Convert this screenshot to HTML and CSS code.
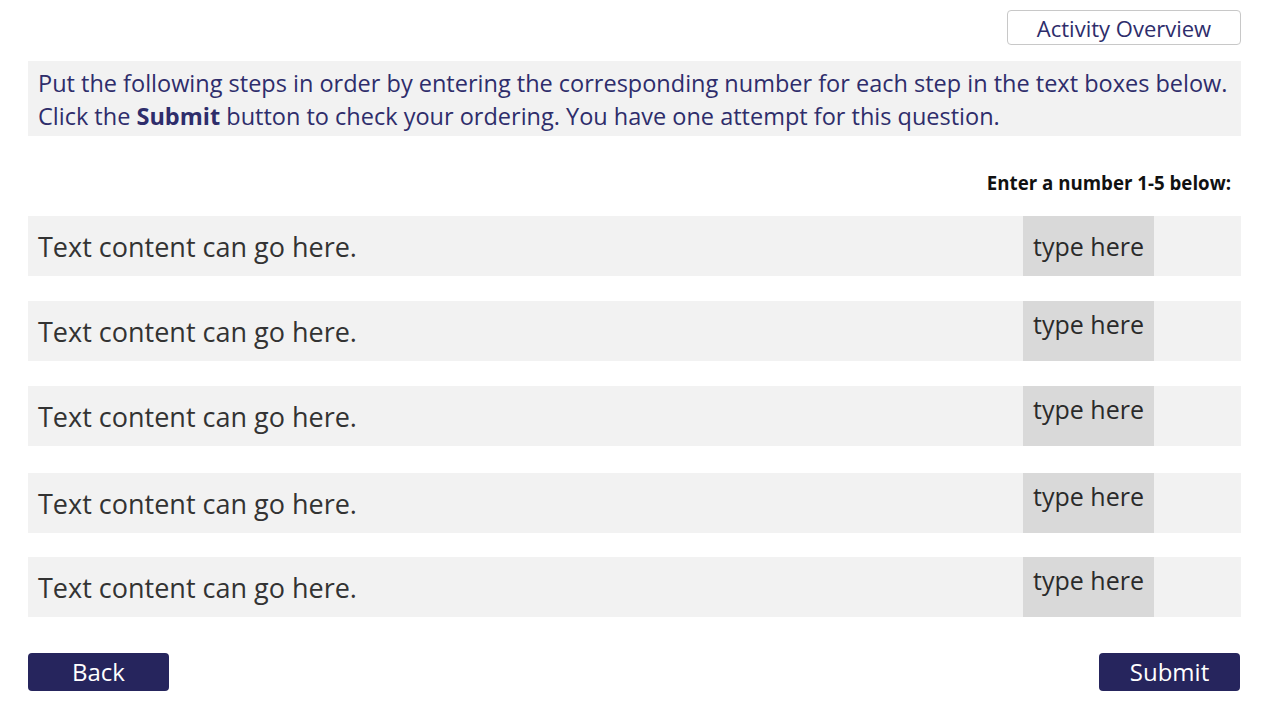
FILE: index.html
```html
<!DOCTYPE html>
<html>
<head>
<meta charset="utf-8">
<link rel="stylesheet" href="styles.css">
</head>
<body>
<div class="page">
  <div class="topbar">
    <button class="overview">Activity Overview</button>
  </div>
  <div class="instructions">
    <p>Put the following steps in order by entering the corresponding number for each step in the text boxes below.</p>
    <p>Click the <b>Submit</b> button to check your ordering. You have one attempt for this question.</p>
  </div>
  <div class="hint">Enter a number 1-5 below:</div>
  <div class="rows">
    <div class="row"><span class="step">Text content can go here.</span><span class="entry entry-first">type here</span></div>
    <div class="row"><span class="step">Text content can go here.</span><span class="entry">type here</span></div>
    <div class="row"><span class="step">Text content can go here.</span><span class="entry">type here</span></div>
    <div class="row row-shift"><span class="step">Text content can go here.</span><span class="entry">type here</span></div>
    <div class="row"><span class="step">Text content can go here.</span><span class="entry">type here</span></div>
  </div>
  <div class="footer">
    <button class="nav">Back</button>
    <button class="nav">Submit</button>
  </div>
</div>
</body>
</html>
```
FILE: styles.css
```css
html, body {
  margin: 0;
  padding: 0;
  background: #ffffff;
  font-family: "Open Sans", "Noto Sans", sans-serif;
}
.page {
  padding: 10px 26px 0 28px;
  display: flex;
  flex-direction: column;
}
.topbar {
  display: flex;
  justify-content: flex-end;
}
.overview {
  width: 234px;
  height: 35px;
  border: 1px solid #c8c8c8;
  border-radius: 4px;
  background: #ffffff;
  color: #2e2d6b;
  font-family: inherit;
  font-size: 22px;
  padding: 0;
  line-height: 35px;
}
.instructions {
  margin-top: 16px;
  background: #f2f2f2;
  padding: 6px 10px 4px 10px;
  height: 65px;
  color: #2e2d6b;
  font-size: 23.5px;
  line-height: 33px;
}
.instructions p {
  margin: 0;
  white-space: nowrap;
}
.hint {
  margin-top: 35px;
  text-align: right;
  padding-right: 10px;
  font-size: 18.7px;
  font-weight: bold;
  color: #111111;
  line-height: 24px;
}
.rows {
  margin-top: 21px;
  display: flex;
  flex-direction: column;
  gap: 25px;
}
.row {
  height: 60px;
  background: #f2f2f2;
  display: flex;
  align-items: stretch;
  justify-content: space-between;
  padding-right: 87px;
}
.row-shift {
  margin-top: 2px;
  margin-bottom: -1px;
}
.step {
  padding-left: 10px;
  font-size: 27px;
  color: #333333;
  display: flex;
  align-items: center;
}
.entry {
  width: 131px;
  background: #d9d9d9;
  font-size: 25px;
  color: #2a2a2a;
  text-align: center;
  line-height: 32px;
  padding-top: 7px;
  box-sizing: border-box;
}
.entry-first {
  padding-top: 14px;
}
.footer {
  margin-top: 36px;
  display: flex;
  justify-content: space-between;
  padding-right: 1px;
}
.nav {
  width: 141px;
  height: 38px;
  border: none;
  border-radius: 4px;
  background: #26255d;
  color: #ffffff;
  font-family: inherit;
  font-size: 24px;
  padding: 0;
  line-height: 38px;
}
```
